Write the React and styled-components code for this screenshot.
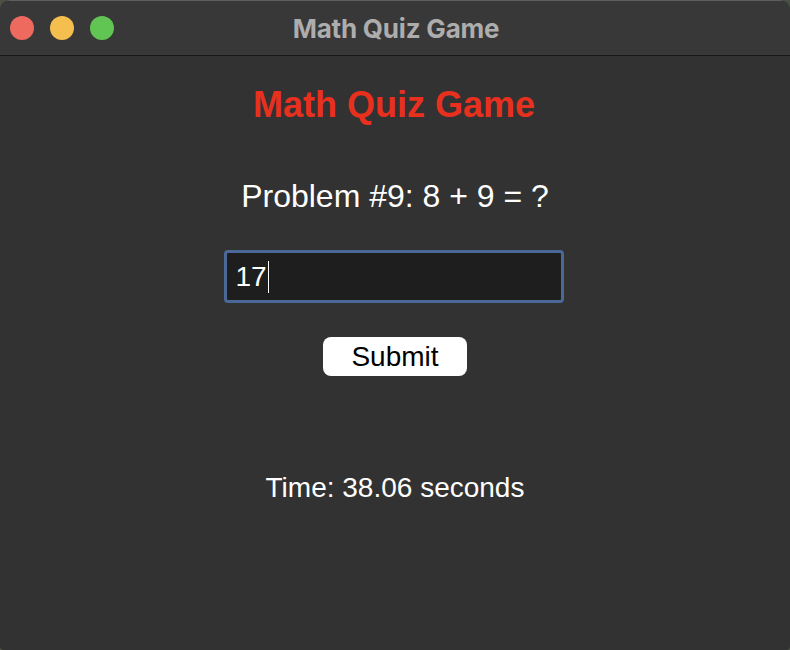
import React from "react";
import styled, { createGlobalStyle } from "styled-components";

const GlobalStyle = createGlobalStyle`
  html, body {
    margin: 0;
    padding: 0;
    background: #4a5044;
  }
  body {
    font-family: "Liberation Sans", Arial, sans-serif;
  }
`;

const Window = styled.div`
  width: 790px;
  height: 650px;
  background: #323232;
  border-radius: 10px 10px 4px 4px;
  overflow: hidden;
  display: flex;
  flex-direction: column;
`;

const TitleBar = styled.div`
  height: 56px;
  flex-shrink: 0;
  background: #383838;
  border-bottom: 1.5px solid #161616;
  border-top: 1px solid #5e5e5e;
  box-sizing: border-box;
  display: flex;
  align-items: center;
  position: relative;
  padding-left: 10px;
  gap: 16px;
`;

const Light = styled.span`
  width: 24px;
  height: 24px;
  border-radius: 50%;
  background: ${(p) => p.color};
`;

const WindowTitle = styled.div`
  position: absolute;
  left: 0;
  right: 0;
  text-align: center;
  color: #adadad;
  font-family: "Inter", "Liberation Sans", sans-serif;
  font-weight: 700;
  font-size: 26px;
  letter-spacing: -0.2px;
  pointer-events: none;
  padding-left: 2px;
`;

const Content = styled.main`
  flex: 1;
  display: flex;
  flex-direction: column;
  align-items: center;
  padding-top: 29px;
  color: #ffffff;
`;

const Heading = styled.h1`
  margin: 0 0 0 -2px;
  font-size: 36px;
  line-height: 40px;
  font-weight: 700;
  color: #e8301f;
`;

const Problem = styled.p`
  margin: 53px 0 0;
  font-size: 32px;
  line-height: 36px;
`;

const AnswerBox = styled.div`
  margin: 36px 0 0 -3px;
  width: 340px;
  height: 53px;
  box-sizing: border-box;
  border: 3px solid #4a6898;
  border-radius: 4px;
  background: #1e1e1e;
  display: flex;
  align-items: center;
  padding-left: 9px;
  font-size: 28px;
  color: #ffffff;
`;

const Caret = styled.span`
  display: inline-block;
  width: 1.5px;
  height: 32px;
  background: #ffffff;
  margin-left: 1px;
`;

const SubmitButton = styled.button`
  margin-top: 34px;
  width: 144px;
  height: 39px;
  border: none;
  border-radius: 8px;
  background: #ffffff;
  color: #000000;
  font-family: "Liberation Sans", Arial, sans-serif;
  font-size: 28px;
  padding: 0;
  cursor: pointer;
`;

const Timer = styled.p`
  margin: 96px 0 0;
  font-size: 28px;
  line-height: 32px;
`;

export default function App() {
  const answer = "17";

  return (
    <>
      <GlobalStyle />
      <Window>
        <TitleBar>
          <Light color="#ee6a5f" />
          <Light color="#f5bf4f" />
          <Light color="#61c554" />
          <WindowTitle>Math Quiz Game</WindowTitle>
        </TitleBar>
        <Content>
          <Heading>Math Quiz Game</Heading>
          <Problem>Problem #9: 8 + 9 = ?</Problem>
          <AnswerBox>
            <span>{answer}</span>
            <Caret />
          </AnswerBox>
          <SubmitButton>Submit</SubmitButton>
          <Timer>Time: 38.06 seconds</Timer>
        </Content>
      </Window>
    </>
  );
}
